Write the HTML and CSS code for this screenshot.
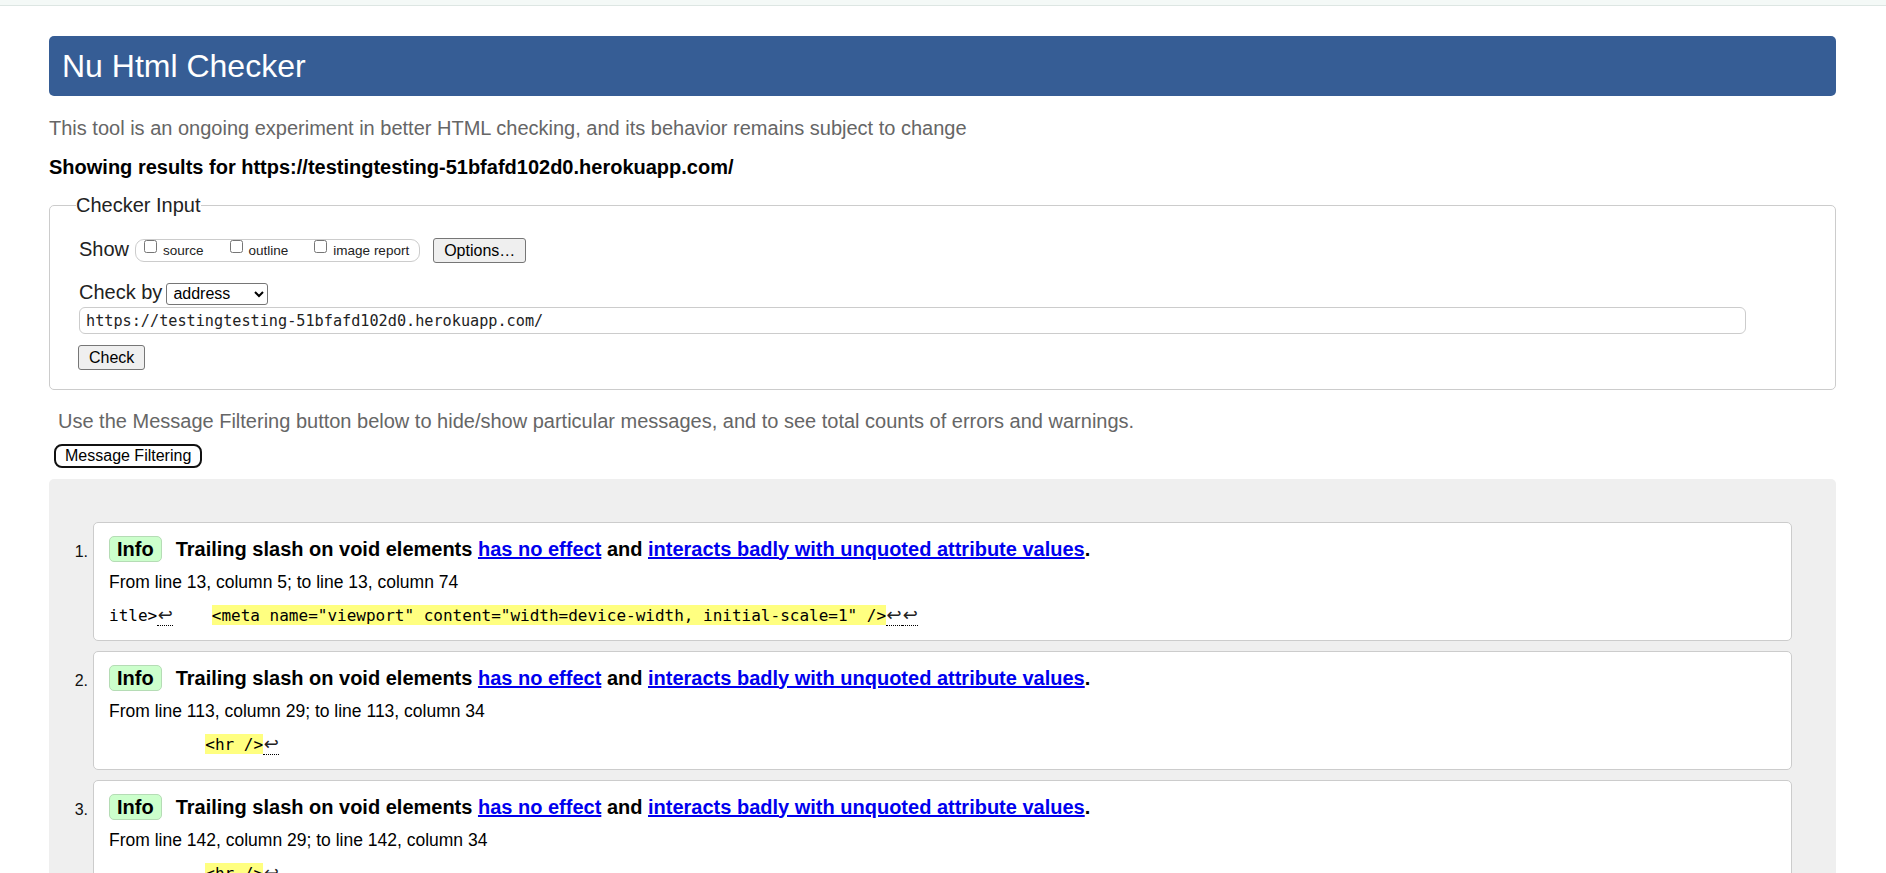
FILE: index.html
```html
<!DOCTYPE html>
<html lang="en">
<head>
<meta charset="utf-8">
<title>Showing results for https://testingtesting-51bfafd102d0.herokuapp.com/ - Nu Html Checker</title>
<link rel="stylesheet" href="styles.css">
</head>
<body>
<div class="topbar"></div>
<main class="page">
  <h1 class="title">Nu Html Checker</h1>
  <p class="desc">This tool is an ongoing experiment in better HTML checking, and its behavior remains subject to change</p>
  <p class="showing">Showing results for https://testingtesting-51bfafd102d0.herokuapp.com/</p>

  <fieldset class="input-box">
    <legend>Checker Input</legend>
    <div class="row show-row">
      <span class="row-label">Show</span>
      <span class="opts">
        <input type="checkbox" id="cb-source"><label for="cb-source">source</label>
        <input type="checkbox" id="cb-outline"><label for="cb-outline">outline</label>
        <input type="checkbox" id="cb-image"><label for="cb-image">image report</label>
      </span>
      <button class="btn options" type="button">Options…</button>
    </div>
    <div class="row by-row">
      <span class="row-label">Check by</span>
      <select class="by"><option>address</option><option>file upload</option><option>text input</option></select>
    </div>
    <input class="url" type="text" value="https://testingtesting-51bfafd102d0.herokuapp.com/">
    <button class="btn check" type="button">Check</button>
  </fieldset>

  <p class="hint">Use the Message Filtering button below to hide/show particular messages, and to see total counts of errors and warnings.</p>
  <button class="filter" type="button">Message Filtering</button>

  <section class="results">
    <ol class="msgs">
      <li class="msg">
        <span class="num">1.</span>
        <div class="card">
          <p class="head"><span class="badge">Info</span><span class="text">Trailing slash on void elements <a href="#">has no effect</a> and <a href="#">interacts badly with unquoted attribute values</a>.</span></p>
          <p class="loc">From line 13, column 5; to line 13, column 74</p>
          <p class="extract"><code>itle&gt;<span class="lf" title="Line break">↩</span>    <b>&lt;meta name="viewport" content="width=device-width, initial-scale=1" /&gt;</b><span class="lf" title="Line break">↩</span><span class="lf" title="Line break">↩</span></code></p>
        </div>
      </li>
      <li class="msg">
        <span class="num">2.</span>
        <div class="card">
          <p class="head"><span class="badge">Info</span><span class="text">Trailing slash on void elements <a href="#">has no effect</a> and <a href="#">interacts badly with unquoted attribute values</a>.</span></p>
          <p class="loc">From line 113, column 29; to line 113, column 34</p>
          <p class="extract"><code>          <b>&lt;hr /&gt;</b><span class="lf" title="Line break">↩</span></code></p>
        </div>
      </li>
      <li class="msg">
        <span class="num">3.</span>
        <div class="card">
          <p class="head"><span class="badge">Info</span><span class="text">Trailing slash on void elements <a href="#">has no effect</a> and <a href="#">interacts badly with unquoted attribute values</a>.</span></p>
          <p class="loc">From line 142, column 29; to line 142, column 34</p>
          <p class="extract"><code>          <b>&lt;hr /&gt;</b><span class="lf" title="Line break">↩</span></code></p>
        </div>
      </li>
    </ol>
  </section>
</main>
</body>
</html>
```

FILE: styles.css
```css
* { box-sizing: border-box; }

html, body {
  height: 100%;
  overflow: hidden;
}

body {
  margin: 0;
  font-family: "Liberation Sans", Arial, sans-serif;
  color: #000;
  background: #fff;
}

.topbar {
  height: 6px;
  background: #f4f9f7;
  border-bottom: 1px solid #dde6e3;
}

.page {
  padding: 0 50px 0 49px;
}

.title {
  margin: 30px 0 0;
  padding: 12px 12px 12px 13px;
  font-size: 32px;
  line-height: 36px;
  font-weight: normal;
  color: #fff;
  background: #365d95;
  border-radius: 5px;
}

.desc {
  margin: 21px 0 0;
  font-size: 20px;
  line-height: 23px;
  color: #666;
}

.showing {
  margin: 16px 0 0;
  font-size: 20px;
  line-height: 23px;
  font-weight: bold;
  color: #000;
}

/* Checker input */
.input-box {
  margin: 15px 0 0;
  padding: 21px 28px 19px 29px;
  border: 1px solid #ccc;
  border-radius: 5px;
  min-width: 0;
}

.input-box legend {
  padding: 0;
  margin-left: -3px;
  font-size: 20px;
  line-height: 23px;
  color: #222;
}

.row {
  display: flex;
}

.show-row {
  height: 25px;
  align-items: flex-start;
}

.row-label {
  font-size: 20px;
  line-height: 23px;
  color: #222;
}

.opts {
  display: flex;
  align-items: flex-start;
  height: 23px;
  margin: 1px 0 0 6px;
  padding: 0 10px 0 8px;
  border: 1px solid #ccc;
  border-radius: 9px;
}

.opts input {
  margin: 0 6px 0 0;
  width: 13px;
  height: 13px;
}

.opts label {
  font-size: 13.5px;
  line-height: 21px;
  margin-right: 26px;
  color: #222;
}

.opts label:last-child {
  margin-right: 0;
}

.btn {
  font-family: inherit;
  font-size: 16px;
  height: 25px;
  padding: 0 10px;
  line-height: 21px;
  color: #000;
  background: #efefef;
  border: 1px solid #767676;
  border-radius: 3px;
}

.options {
  margin-left: 13px;
}

.by-row {
  margin-top: 18px;
  height: 23px;
  align-items: flex-start;
}

.by {
  margin: 1.5px 0 0 4px;
  width: 102px;
  height: 22px;
  padding: 0 2px;
  font-family: inherit;
  font-size: 16px;
  color: #000;
  background: #fff;
  border: 1px solid #767676;
  border-radius: 3px;
}

.url {
  display: block;
  margin-top: 3px;
  width: 1667px;
  height: 27px;
  padding: 0 6px;
  border: 1px solid #ccc;
  border-radius: 6px;
  font-family: "DejaVu Sans Mono", "Liberation Mono", monospace;
  font-size: 15.2px;
  color: #222;
  background: #fff;
}

.check {
  display: block;
  margin: 11px 0 0 -1px;
}

.hint {
  margin: 20px 0 0;
  padding-left: 9px;
  font-size: 20px;
  line-height: 23px;
  color: #666;
}

.filter {
  display: block;
  margin: 11px 0 0 5px;
  height: 24px;
  padding: 0 9px;
  font-family: inherit;
  font-size: 16px;
  line-height: 20px;
  color: #000;
  background: #fff;
  border: 2px solid #111;
  border-radius: 8px;
}

/* Results */
.results {
  margin-top: 11px;
  padding: 43px 44px 43px 0;
  background: #efefef;
  border-radius: 5px;
}

.msgs {
  margin: 0;
  padding: 0;
  list-style: none;
}

.msg {
  display: flex;
  margin-bottom: 10px;
}

.num {
  flex: 0 0 44px;
  padding: 21px 5px 0 0;
  text-align: right;
  font-size: 16px;
  line-height: 18px;
  color: #111;
}

.card {
  flex: 1;
  min-width: 0;
  padding: 13px 15px 14px;
  background: #fff;
  border: 1px solid #ccc;
  border-radius: 5px;
}

.head {
  display: flex;
  align-items: center;
  height: 26px;
  margin: 0;
}

.badge {
  height: 26px;
  margin-right: 14px;
  padding: 0 7px;
  font-size: 20px;
  line-height: 24px;
  font-weight: bold;
  background: #ccffcc;
  border: 1px solid #b5dcb5;
  border-radius: 5px;
}

.text {
  font-size: 20px;
  line-height: 23px;
  font-weight: bold;
}

.text a {
  color: #0000ee;
  text-decoration: underline;
}

.loc {
  margin: 10px 0 0;
  font-size: 17.5px;
  line-height: 20px;
}

.extract {
  margin: 13px 0 0;
  font-size: 16px;
  line-height: 20px;
  white-space: pre;
}

.extract code {
  font-family: "DejaVu Sans Mono", "Liberation Mono", monospace;
  font-size: 16px;
}

.extract b {
  font-weight: normal;
  background: #ffff80;
  padding-top: 1px;
}

.lf {
  font-family: "DejaVu Sans", sans-serif;
  font-size: 18px;
  padding: 0 0.5px;
  border-bottom: 1px dotted #000;
  color: #222;
}
```
